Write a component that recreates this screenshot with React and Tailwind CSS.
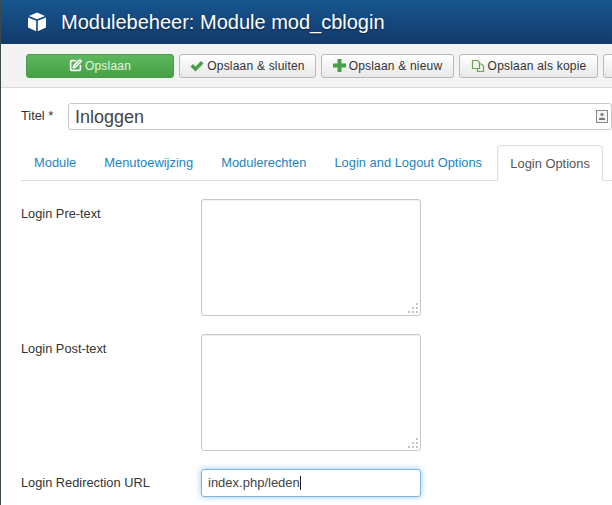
import { SquarePen } from "lucide-react";

const ToolbarButton = ({ icon, label, className = "" }) => {
  return (
    <div
      className={`flex h-6 shrink-0 items-center justify-center gap-[3px] rounded-[3px] border border-[#b9b9b9] bg-gradient-to-b from-white to-[#e8e8e8] text-[12px] tracking-[0.2px] text-[#333] ${className}`}
    >
      {icon}
      <span>{label}</span>
    </div>
  );
};

const CheckIcon = () => (
  <svg width="14" height="12" viewBox="0 0 14 12" fill="#46a146">
    <path d="M0.5 6.5L3 4l2.5 2.5L11 1l2.5 2.5-8 8z" />
  </svg>
);

const PlusIcon = () => (
  <svg width="13" height="13" viewBox="0 0 13 13" fill="#46a146">
    <path d="M4.5 0h4v4.5H13v4H8.5V13h-4V8.5H0v-4h4.5z" />
  </svg>
);

const CopyIcon = () => (
  <svg width="14" height="14" viewBox="0 0 14 14" fill="none" stroke="#6aa84f" strokeWidth="1.2">
    <path d="M1.5 1.5h5l2 2v6h-7z" />
    <path d="M8.5 5h2l2 2v5.5h-6V9.5" />
  </svg>
);

const ResizeHandle = () => (
  <svg className="absolute bottom-[1px] right-[1px]" width="12" height="12" viewBox="0 0 12 12" fill="#c4c4c4">
    <rect x="9" y="1" width="2" height="2" />
    <rect x="5" y="5" width="2" height="2" />
    <rect x="9" y="5" width="2" height="2" />
    <rect x="1" y="9" width="2" height="2" />
    <rect x="5" y="9" width="2" height="2" />
    <rect x="9" y="9" width="2" height="2" />
  </svg>
);

const TextArea = () => (
  <div className="relative h-[117px] w-[220px] rounded-[3px] border border-[#c8c8c8] bg-white shadow-[inset_0_1px_1px_rgba(0,0,0,0.06)]">
    <ResizeHandle />
  </div>
);

const Tab = ({ label, className = "" }) => (
  <div className={`flex h-[37px] items-center pt-[2px] text-[12.9px] text-[#2384bd] ${className}`}>{label}</div>
);

const App = () => {
  return (
    <div className="h-[505px] w-[612px] overflow-hidden border-l border-[#3c4a50] bg-white font-['Liberation_Sans',Arial,sans-serif]">
      {/* header */}
      <div className="flex h-11 items-center bg-gradient-to-b from-[#17568f] to-[#123a6b] pl-[26px]">
        <svg width="20" height="20" viewBox="0 0 20 20" fill="white">
          <path d="M10 0.5l8 3.4L10 7.2 2 3.9z" />
          <path d="M1 5.4l8.2 3.4v10.4L1 15.4z" />
          <path d="M19 5.4l-8.2 3.4v10.4l8.2-3.8z" />
        </svg>
        <h1 className="ml-[14px] whitespace-nowrap text-[20px] leading-none text-white [text-shadow:0_1px_2px_rgba(0,0,0,0.5)]">
          Modulebeheer: Module mod_cblogin
        </h1>
      </div>

      {/* toolbar */}
      <div className="flex h-[44px] items-center gap-[5px] border-b border-[#d8d8d8] bg-[#f3f3f3] pl-[25px]">
        <ToolbarButton
          className="w-[148px] !border-[#4a9a4a] !from-[#5cb85c] !to-[#46a146] !text-white/85"
          icon={<SquarePen size={13} strokeWidth={3} className="text-white" />}
          label="Opslaan"
        />
        <ToolbarButton className="w-[137px]" icon={<CheckIcon />} label="Opslaan & sluiten" />
        <ToolbarButton className="w-[133px]" icon={<PlusIcon />} label="Opslaan & nieuw" />
        <ToolbarButton className="w-[139px]" icon={<CopyIcon />} label="Opslaan als kopie" />
        <div className="h-6 w-[30px] shrink-0 rounded-[3px] border border-[#b9b9b9] bg-gradient-to-b from-white to-[#e8e8e8]" />
      </div>

      {/* title */}
      <div className="flex items-center pl-5 pt-[15px]">
        <label className="w-[47px] -translate-y-px text-[12.8px] text-[#333]">Titel *</label>
        <div className="flex h-[27px] flex-1 items-center justify-between rounded-[3px] border border-[#c8c8c8] bg-white pl-[6px] pr-[3px]">
          <span className="block h-[21px] overflow-hidden text-[18px] leading-[23px] text-[#444]">Inloggen</span>
          <svg width="12" height="13" viewBox="0 0 12 13" fill="none">
            <rect x="0.5" y="0.5" width="11" height="12" fill="#f4f4f4" stroke="#888" />
            <circle cx="6" cy="4.5" r="1.6" fill="#777" />
            <path d="M3 10V8.5C3 7.5 9 7.5 9 8.5V10z" fill="#777" />
          </svg>
        </div>
      </div>

      {/* tabs */}
      <div className="ml-5 mt-[15px] flex h-[36px] items-end border-b border-[#ddd] text-nowrap">
        <Tab label="Module" className="ml-[13px]" />
        <Tab label="Menutoewijzing" className="ml-[28px]" />
        <Tab label="Modulerechten" className="ml-[28px]" />
        <Tab label="Login and Logout Options" className="ml-[28px]" />
        <div className="relative top-px ml-[15px] flex h-[36px] w-[106px] items-center justify-center rounded-t-[4px] border border-b-white border-[#ddd] bg-white pt-[1px] text-[12.9px] text-[#555]">
          Login Options
        </div>
      </div>

      {/* form */}
      <div className="flex flex-col pl-5 pt-[18px] text-[12.8px] text-[#333]">
        <div className="flex">
          <label className="w-[180px] pt-[5px]">Login Pre-text</label>
          <TextArea />
        </div>
        <div className="mt-[18px] flex">
          <label className="w-[180px] pt-[5px]">Login Post-text</label>
          <TextArea />
        </div>
        <div className="mt-[18px] flex items-center">
          <label className="w-[180px]">Login Redirection URL</label>
          <div className="flex h-7 w-[220px] items-center rounded-[3px] border border-[#7fb5e0] bg-white pl-[6px] text-[13px] text-[#444] shadow-[0_0_6px_rgba(82,168,236,0.6)]">
            index.php/leden
            <span className="h-[14px] w-px bg-[#222]" />
          </div>
        </div>
      </div>
    </div>
  );
};

export default App;
